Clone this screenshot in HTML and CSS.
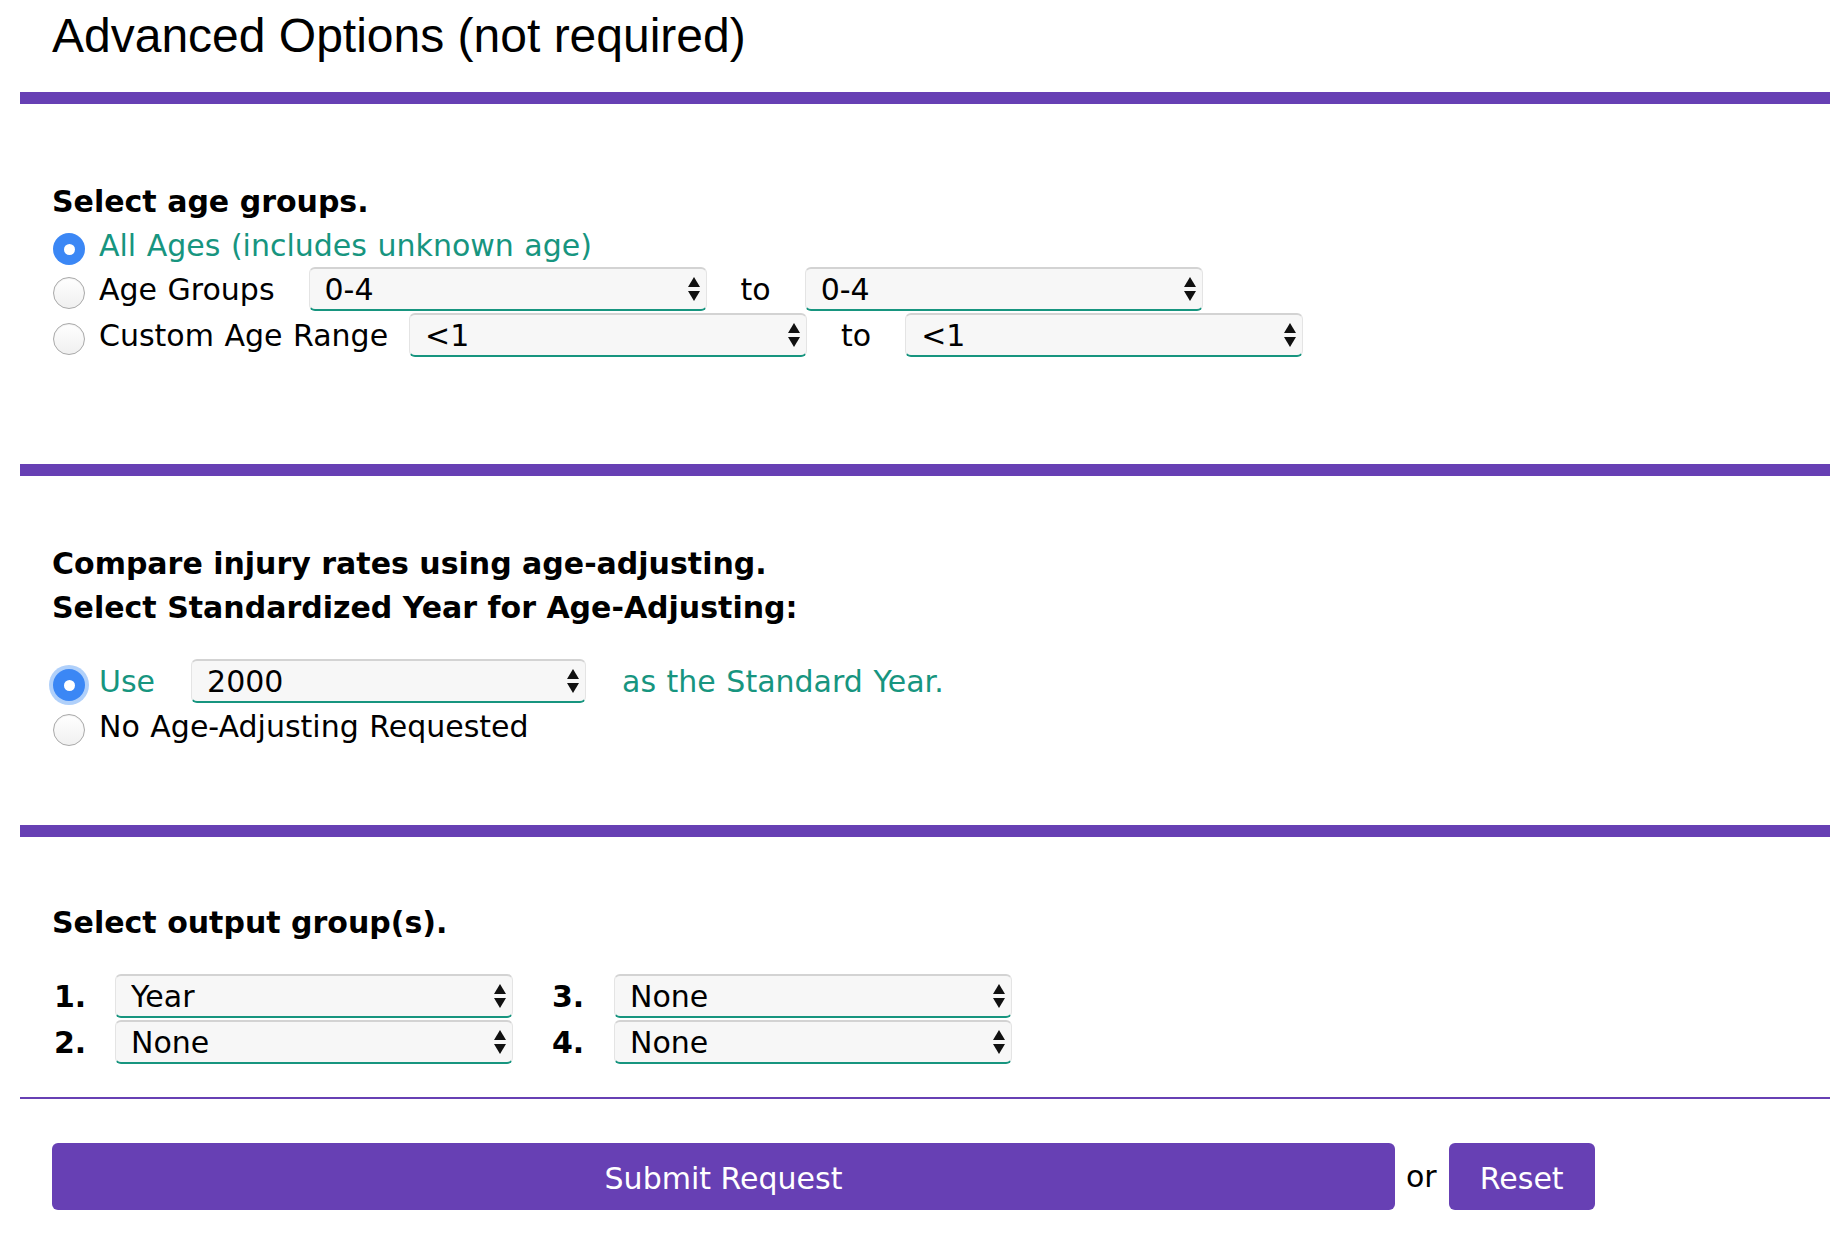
FILE: index.html
```html
<!DOCTYPE html>
<html lang="en">
<head>
  <meta charset="utf-8">
  <meta name="viewport" content="width=device-width, initial-scale=1">
  <title>Advanced Options</title>
  <link rel="stylesheet" href="styles.css">
</head>
<body>
  <h1 class="title">Advanced Options (not required)</h1>
  <div class="bar"></div>

  <div class="section sec-age">
    <div class="heading">Select age groups.</div>
    <div class="opt opt-short">
      <label class="choice on"><input type="radio" name="age" checked> All Ages (includes unknown age)</label>
    </div>
    <div class="opt">
      <label class="choice"><input type="radio" name="age"> Age Groups</label>
      <span class="sel"><select><option>0-4</option></select></span>
      <span>to</span>
      <span class="sel"><select><option>0-4</option></select></span>
    </div>
    <div class="opt">
      <label class="choice tight"><input type="radio" name="age"> Custom Age Range</label>
      <span class="sel"><select><option>&lt;1</option></select></span>
      <span>to</span>
      <span class="sel"><select><option>&lt;1</option></select></span>
    </div>
  </div>
  <div class="bar"></div>

  <div class="section sec-adjust">
    <div class="heading">Compare injury rates using age-adjusting.</div>
    <div class="heading">Select Standardized Year for Age-Adjusting:</div>
    <div class="opt opt-use">
      <label class="choice on"><input type="radio" name="adj" class="focus" checked> Use</label>
      <span class="sel sel-year"><select><option>2000</option></select></span>
      <span class="on">as the Standard Year.</span>
    </div>
    <div class="opt opt-short">
      <label class="choice"><input type="radio" name="adj"> No Age-Adjusting Requested</label>
    </div>
  </div>
  <div class="bar"></div>

  <div class="section sec-output">
    <div class="heading">Select output group(s).</div>
    <div class="groups">
      <b>1.</b>
      <span class="sel"><select><option>Year</option></select></span>
      <b>3.</b>
      <span class="sel"><select><option>None</option></select></span>
      <b>2.</b>
      <span class="sel"><select><option>None</option></select></span>
      <b>4.</b>
      <span class="sel"><select><option>None</option></select></span>
    </div>
  </div>
  <div class="rule"></div>

  <div class="actions">
    <button class="btn btn-submit">Submit Request</button>
    <span>or</span>
    <button class="btn btn-reset">Reset</button>
  </div>
</body>
</html>
```

FILE: styles.css
```css
body {
  margin: 0;
  font-family: "DejaVu Sans", Verdana, sans-serif;
  font-size: 30px;
  word-spacing: 1px;
  color: #000;
  background: #fff;
}
.title {
  margin: 0;
  padding: 8px 0 0 52px;
  font: normal 48px/55px "Liberation Sans", Arial, sans-serif;
  word-spacing: 0;
}
.bar {
  height: 12px;
  margin-left: 20px;
  background: #6740b4;
}
.title + .bar {
  margin-top: 29px;
}
.rule {
  height: 2px;
  margin-left: 20px;
  background: #6740b4;
}
.section {
  padding-left: 52px;
}
.sec-age {
  padding-top: 76px;
  padding-bottom: 106px;
}
.sec-adjust {
  padding-top: 66px;
  padding-bottom: 77px;
}
.sec-output {
  padding-top: 64px;
  padding-bottom: 32px;
}
.heading {
  font-weight: bold;
  line-height: 44px;
  word-spacing: 0;
}
.opt {
  display: flex;
  align-items: center;
  gap: 34px;
  height: 46px;
}
.opt-short {
  height: 42px;
}
.sec-adjust .opt-short {
  height: 44px;
}
.opt-use {
  margin-top: 28px;
  gap: 36px;
}
.choice {
  display: flex;
  align-items: center;
  gap: 14px;
}
.choice.tight {
  margin-right: -13px;
}
.on {
  color: #17957f;
}
input[type="radio"] {
  appearance: none;
  -webkit-appearance: none;
  box-sizing: border-box;
  width: 32px;
  height: 32px;
  margin: 8px 0 0 1px;
  border: 1px solid #a9a9a9;
  border-radius: 50%;
  background: linear-gradient(#fff, #f0f0f0);
  box-shadow: inset 0 1px 1px rgba(0, 0, 0, 0.06);
  display: flex;
  align-items: center;
  justify-content: center;
  flex: none;
}
input[type="radio"]:checked {
  border: none;
  background: #3b87f5;
  box-shadow: none;
}
input[type="radio"]:checked::after {
  content: "";
  width: 11px;
  height: 11px;
  border-radius: 50%;
  background: #fff;
}
input[type="radio"].focus {
  box-shadow: 0 0 0 4px rgba(80, 150, 245, 0.45);
}
.sel {
  position: relative;
  display: inline-flex;
  flex: none;
  justify-self: start;
}
.sel select {
  appearance: none;
  -webkit-appearance: none;
  box-sizing: border-box;
  width: 398px;
  height: 44px;
  margin: 0;
  padding: 0 40px 0 15px;
  font: inherit;
  color: #000;
  background: #f7f7f7;
  border: 1px solid #e4e4e4;
  border-top: 2px solid #d3d3d3;
  border-bottom: 2px solid #17957f;
  border-radius: 6px;
}
.sel-year select {
  width: 395px;
}
.sel::before,
.sel::after {
  content: "";
  position: absolute;
  right: 7px;
  top: 50%;
  border-left: 6px solid transparent;
  border-right: 6px solid transparent;
}
.sel::before {
  margin-top: -12px;
  border-bottom: 10px solid #111;
}
.sel::after {
  margin-top: 2px;
  border-top: 10px solid #111;
}
.groups {
  display: grid;
  grid-template-columns: 63px 435px 64px 400px;
  grid-auto-rows: 46px;
  align-items: center;
  margin-top: 28px;
}
.groups b {
  padding-left: 2px;
  word-spacing: 0;
}
.actions {
  display: flex;
  align-items: center;
  gap: 11px;
  margin: 44px 0 0 52px;
}
.btn {
  height: 67px;
  padding: 4px 0 0;
  border: none;
  border-radius: 6px;
  background: #6740b4;
  color: #fff;
  font: inherit;
  cursor: pointer;
}
.btn-submit {
  width: 1343px;
}
.btn-reset {
  width: 146px;
  margin-left: 1px;
}
```
